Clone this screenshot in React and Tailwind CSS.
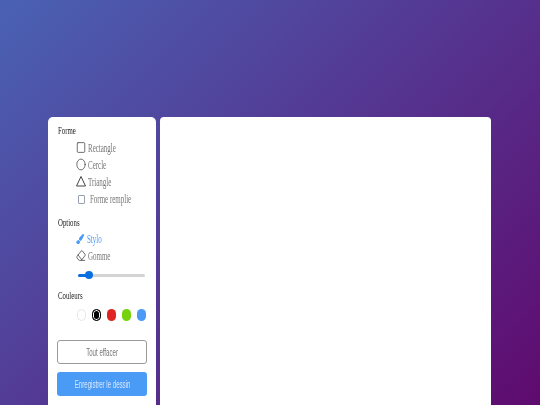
import React, { useState } from 'react';
import { Square, Circle, Eraser } from 'lucide-react';
import { FaPaintBrush } from 'react-icons/fa';

function TriangleIcon({ className }) {
  return (
    <svg viewBox="0 0 10 13" fill="none" stroke="currentColor" strokeWidth="1" className={className}>
      <path d="M5 1.5 L9.5 11 H0.5 Z" strokeLinejoin="round" />
    </svg>
  );
}

const shapes = [
  { label: 'Rectangle', Icon: Square },
  { label: 'Cercle', Icon: Circle },
  { label: 'Triangle', Icon: TriangleIcon },
];

const colors = [
  { name: 'white', cls: 'bg-white border border-gray-200' },
  { name: 'black', cls: 'bg-black border border-black shadow-[inset_0_0_0_1px_white]' },
  { name: 'red', cls: 'bg-[#e02424]' },
  { name: 'green', cls: 'bg-[#76d20a]' },
  { name: 'blue', cls: 'bg-[#4a9bf5]' },
];

function SectionTitle({ children }) {
  return <h3 className="ml-px text-[11px] leading-[14px] text-[#222] scale-x-[0.62] origin-left whitespace-nowrap">{children}</h3>;
}

export default function App() {
  const [size, setSize] = useState(15);

  return (
    <div className="h-[405px] overflow-hidden bg-[linear-gradient(135deg,#4a62b4_0%,#5f0a6e_100%)] flex gap-1 pl-12 pr-[49px] pt-[117px]">
      <aside className="w-[108px] h-[320px] shrink-0 bg-white rounded-[5px] px-[9px] pt-[6px] font-['Liberation_Serif',serif]">
        <div className="blur-[0.3px]">
          <SectionTitle>Forme</SectionTitle>
          <div className="mt-[2px] pl-[19px] flex flex-col">
            {shapes.map(({ label, Icon }) => (
              <div key={label} className="h-[17px] flex items-center gap-[2px] text-[12px] text-[#777]">
                <Icon preserveAspectRatio="none" strokeWidth={1.6} className="w-[10px] h-[13px] text-[#444]" />
                <span className="scale-x-[0.58] origin-left whitespace-nowrap">{label}</span>
              </div>
            ))}
            <label className="h-[18px] flex items-center gap-[5px] pl-[2px] text-[12px] text-[#777]">
              <span className="w-[7px] h-[9px] border border-gray-400 rounded-[1px] shrink-0" />
              <span className="scale-x-[0.58] origin-left whitespace-nowrap">Forme remplie</span>
            </label>
          </div>

          <div className="mt-[7px]">
            <SectionTitle>Options</SectionTitle>
          </div>
          <div className="mt-[1px] pl-[19px] flex flex-col">
            <div className="h-[17px] flex items-center gap-[3px] text-[12px] text-[#4a9bf5]">
              <FaPaintBrush preserveAspectRatio="none" className="w-[8px] h-[10px]" />
              <span className="scale-x-[0.58] origin-left">Stylo</span>
            </div>
            <div className="h-[17px] flex items-center gap-[2px] text-[12px] text-[#777]">
              <Eraser preserveAspectRatio="none" strokeWidth={1.6} className="w-[10px] h-[13px] text-[#444]" />
              <span className="scale-x-[0.58] origin-left">Gomme</span>
            </div>
          </div>
          <div className="mt-[6px] pl-[21px] h-[10px] flex items-center relative">
            <div className="w-[67px] h-[3px] rounded-full bg-[#d4d4d4]">
              <div className="h-full rounded-full bg-[#0a6fe0]" style={{ width: `${size}%` }} />
            </div>
            <span className="absolute left-[28px] top-[1px] w-[8px] h-[8px] rounded-full bg-[#0a6fe0]" />
          </div>

          <div className="mt-[8px]">
            <SectionTitle>Couleurs</SectionTitle>
          </div>
          <div className="mt-[7px] pl-[20px] flex items-center gap-[6px]">
            {colors.map((c) => (
              <button key={c.name} onClick={() => setSize(15)} className={`w-[9px] h-[12px] rounded-full ${c.cls}`} />
            ))}
          </div>

          <div className="mt-[19px] flex flex-col gap-2 font-['Liberation_Sans',sans-serif]">
            <button className="h-[24px] border border-[#999] rounded-[3px] bg-white text-[10px] text-[#777]">
              <span className="inline-block scale-x-[0.61] whitespace-nowrap">Tout effacer</span>
            </button>
            <button className="h-[24px] rounded-[3px] bg-[#4a9bf5] text-[10px] text-[#d8e8ff]">
              <span className="inline-block scale-x-[0.61] whitespace-nowrap">Enregistrer le dessin</span>
            </button>
          </div>
        </div>
      </aside>
      <main className="flex-1 h-[320px] bg-white rounded-[4px]" />
    </div>
  );
}
